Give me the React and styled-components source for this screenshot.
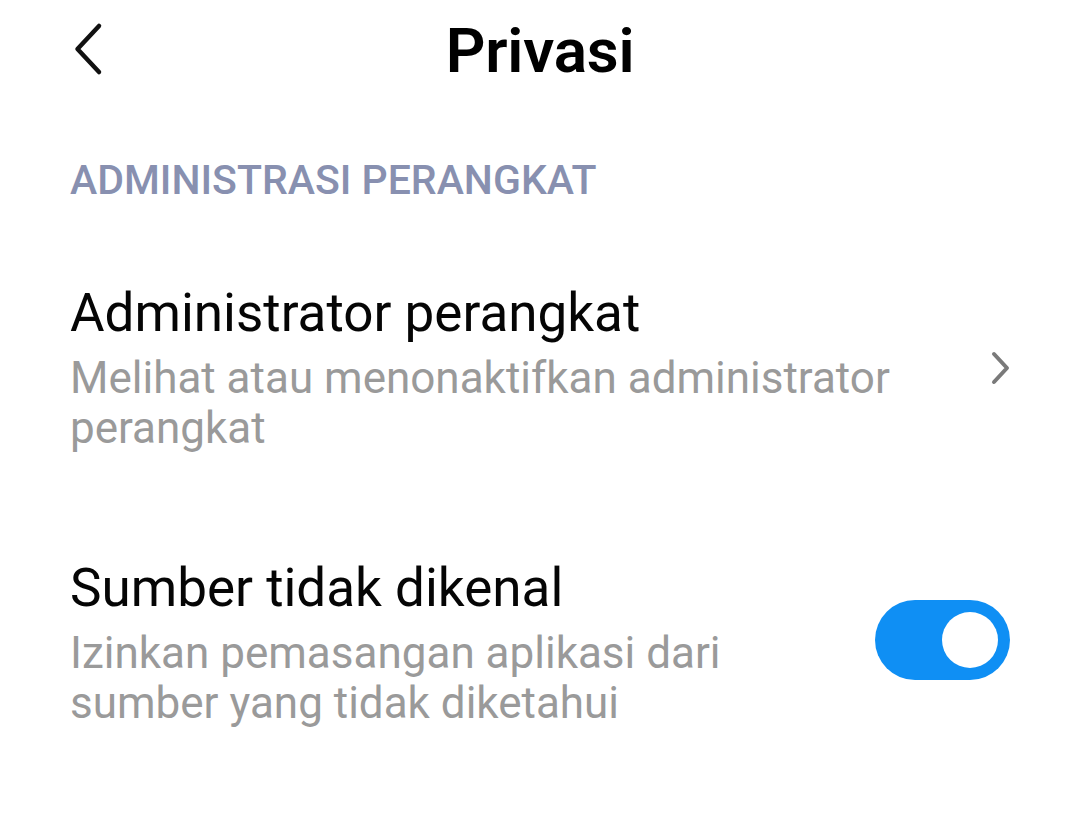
import React, { useState } from 'react'
import styled, { createGlobalStyle } from 'styled-components'

const GlobalStyle = createGlobalStyle`
  html, body {
    margin: 0;
    padding: 0;
    background: #fff;
  }
  body {
    font-family: Roboto, "Noto Sans", "Liberation Sans", sans-serif;
    -webkit-font-smoothing: antialiased;
  }
`

const Screen = styled.div`
  width: 1080px;
  min-height: 830px;
  background: #fff;
  color: #000;
`

const TopBar = styled.header`
  display: grid;
  grid-template-columns: 1fr auto 1fr;
  align-items: center;
  height: 102px;
  padding: 0 70px;
`

const BackButton = styled.button`
  justify-self: start;
  display: flex;
  padding: 0;
  border: 0;
  background: none;
  color: #111;
  cursor: pointer;
  transform: translateY(-2px);
`

const Title = styled.h1`
  margin: 0;
  font-size: 62px;
  line-height: 62px;
  font-weight: 600;
  letter-spacing: -0.2px;
`

const SectionLabel = styled.h2`
  margin: 54px 0 26px;
  padding: 0 70px;
  font-size: 41px;
  line-height: 48px;
  font-weight: 500;
  color: #8890b0;
`

const Row = styled.div`
  display: flex;
  align-items: center;
  gap: 30px;
  padding: 52px 70px;
  cursor: pointer;
`

const RowText = styled.div`
  flex: 1;
  min-width: 0;
`

const RowTitle = styled.div`
  font-size: 53px;
  line-height: 62px;
  color: #050505;
`

const RowHint = styled.div`
  margin-top: 9px;
  font-size: 44px;
  line-height: 50px;
  color: #9a9a9a;
`

const Toggle = styled.button`
  flex: none;
  position: relative;
  width: 135px;
  height: 80px;
  margin-bottom: 6px;
  padding: 0;
  border: 0;
  border-radius: 40px;
  background: ${p => (p.$on ? '#0f8ff4' : '#d9d9d9')};
  cursor: pointer;
  transition: background 0.2s;

  &::after {
    content: '';
    position: absolute;
    top: 12px;
    left: ${p => (p.$on ? '67px' : '12px')};
    width: 56px;
    height: 56px;
    border-radius: 50%;
    background: #fff;
    transition: left 0.2s;
  }
`

const BackIcon = () => (
  <svg width="36" height="56" viewBox="0 0 36 56" fill="none">
    <polyline
      points="29,5 7.5,28 29,51"
      stroke="currentColor"
      strokeWidth="4.5"
      strokeLinecap="round"
      strokeLinejoin="round"
    />
  </svg>
)

const Chevron = styled.svg`
  flex: none;
  color: #7a7a7a;
`

const ChevronRight = () => (
  <Chevron width="20" height="36" viewBox="0 0 20 36" fill="none">
    <polyline
      points="4,4 17,18 4,32"
      stroke="currentColor"
      strokeWidth="4"
      strokeLinecap="round"
      strokeLinejoin="round"
    />
  </Chevron>
)

export default function App() {
  const [unknownSources, setUnknownSources] = useState(true)

  return (
    <Screen>
      <GlobalStyle />
      <TopBar>
        <BackButton aria-label="Kembali">
          <BackIcon />
        </BackButton>
        <Title>Privasi</Title>
        <span />
      </TopBar>

      <SectionLabel>ADMINISTRASI PERANGKAT</SectionLabel>

      <Row>
        <RowText>
          <RowTitle>Administrator perangkat</RowTitle>
          <RowHint>Melihat atau menonaktifkan administrator perangkat</RowHint>
        </RowText>
        <ChevronRight />
      </Row>

      <Row onClick={() => setUnknownSources(v => !v)}>
        <RowText>
          <RowTitle>Sumber tidak dikenal</RowTitle>
          <RowHint>Izinkan pemasangan aplikasi dari sumber yang tidak diketahui</RowHint>
        </RowText>
        <Toggle $on={unknownSources} aria-pressed={unknownSources} />
      </Row>
    </Screen>
  )
}
